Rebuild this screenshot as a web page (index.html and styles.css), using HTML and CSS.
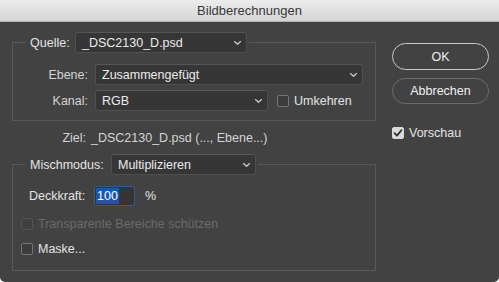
FILE: index.html
```html
<!DOCTYPE html>
<html lang="de">
<head>
<meta charset="utf-8">
<title>Bildberechnungen</title>
<link rel="stylesheet" href="styles.css">
</head>
<body>
<div class="window">
  <div class="titlebar">Bildberechnungen</div>
  <div class="content">
    <div class="main">
      <fieldset class="group group-source">
        <legend class="legend">
          <div class="legend-row">
            <span class="legend-label label-source">Quelle:</span>
            <div class="select select-source"><span>_DSC2130_D.psd</span><svg class="chev" viewBox="0 0 7 4" width="7" height="4"><polyline points="0.5,0.5 3.5,3.3 6.5,0.5"/></svg></div>
          </div>
        </legend>
        <div class="grid">
          <span class="lbl">Ebene:</span>
          <div class="select select-layer"><span>Zusammengefügt</span><svg class="chev" viewBox="0 0 7 4" width="7" height="4"><polyline points="0.5,0.5 3.5,3.3 6.5,0.5"/></svg></div>
          <span class="lbl">Kanal:</span>
          <div class="channel-row">
            <div class="select select-channel"><span>RGB</span><svg class="chev" viewBox="0 0 7 4" width="7" height="4"><polyline points="0.5,0.5 3.5,3.3 6.5,0.5"/></svg></div>
            <div class="check check-invert"><span class="box"></span><span>Umkehren</span></div>
          </div>
        </div>
      </fieldset>

      <div class="target">
        <span class="target-lbl">Ziel:</span>
        <span>_DSC2130_D.psd (..., Ebene...)</span>
      </div>

      <fieldset class="group group-blend">
        <legend class="legend">
          <div class="legend-row">
            <span class="legend-label label-blend">Mischmodus:</span>
            <div class="select select-blend"><span>Multiplizieren</span><svg class="chev" viewBox="0 0 7 4" width="7" height="4"><polyline points="0.5,0.5 3.5,3.3 6.5,0.5"/></svg></div>
          </div>
        </legend>
        <div class="blend-body">
          <div class="opacity-row">
            <span class="opacity-lbl">Deckkraft:</span>
            <div class="number-input"><span class="selected">100</span></div>
            <span class="unit">%</span>
          </div>
          <div class="check check-row disabled"><span class="box"></span><span>Transparente Bereiche schützen</span></div>
          <div class="check check-row check-mask"><span class="box"></span><span>Maske...</span></div>
        </div>
      </fieldset>
    </div>

    <div class="side">
      <div class="btn btn-ok">OK</div>
      <div class="btn btn-cancel">Abbrechen</div>
      <div class="check check-preview"><span class="box checked"><svg viewBox="0 0 12 12" width="12" height="12"><polyline points="2.6,6.2 5,8.6 9.4,3.2"/></svg></span><span>Vorschau</span></div>
    </div>
  </div>
</div>
</body>
</html>
```

FILE: styles.css
```css
* { box-sizing: border-box; }

body {
  margin: 0;
  background: #ffffff;
  font-family: "Liberation Sans", Arial, sans-serif;
  font-size: 12.5px;
}

.window {
  width: 499px;
  height: 282px;
  background: #424242;
  border-radius: 0 0 5px 5px;
  overflow: hidden;
  display: flex;
  flex-direction: column;
  color: #e4e4e4;
}

.titlebar {
  height: 22px;
  border-bottom: 1px solid #b2b2b2;
  background: linear-gradient(#ececec, #d5d5d5);
  color: #383838;
  display: flex;
  align-items: center;
  justify-content: center;
  line-height: 21px;
  font-size: 13px;
}

.content {
  flex: 1;
  display: flex;
  padding: 0 10px 0 12px;
}

.main {
  width: 364px;
  display: flex;
  flex-direction: column;
}

.side {
  margin-left: auto;
  width: 97px;
  display: flex;
  flex-direction: column;
  padding-top: 21px;
}

/* group boxes */
.group {
  margin: 0;
  padding: 0;
  border: 1px solid #585858;
  min-width: 0;
}

.group-source { margin-top: 10px; }
.group-blend { margin-top: 8px; }

.legend {
  margin-left: 13px;
  padding: 0 2px 0 4px;
}

.legend-row {
  display: flex;
  align-items: center;
  height: 21px;
}

.legend-label { line-height: 16px; }
.label-source { width: 45px; }
.label-blend { width: 81px; }

/* selects */
.select {
  height: 21px;
  display: flex;
  align-items: center;
  justify-content: space-between;
  padding: 0 5px 0 6px;
  background: #363636;
  border: 1px solid #4f4f4f;
  border-top-color: #565656;
  border-radius: 3px;
  color: #ececec;
}

.chev {
  fill: none;
  stroke: #c8c8c8;
  stroke-width: 1.3;
  stroke-linecap: round;
  stroke-linejoin: round;
}

.select-source { width: 172px; }
.select-layer { width: 268px; }
.select-channel { width: 173px; }
.select-blend { width: 145px; }

.grid {
  display: grid;
  grid-template-columns: 75px auto;
  column-gap: 7px;
  row-gap: 5px;
  align-items: center;
  padding: 11px 0 9px 0;
}

.lbl {
  text-align: right;
  color: #d4d4d4;
}

.channel-row {
  display: flex;
  align-items: center;
}

/* checkboxes */
.check {
  display: flex;
  align-items: center;
  line-height: 16px;
}

.box {
  width: 12px;
  height: 12px;
  border: 1px solid #757575;
  border-radius: 2px;
  background: #3b3b3b;
  margin-right: 5px;
  flex: none;
}

.box.checked {
  background: #d9d9d9;
  border-color: #d9d9d9;
  position: relative;
}

.box.checked svg {
  position: absolute;
  left: -1px;
  top: -1px;
  fill: none;
  stroke: #2e2e2e;
  stroke-width: 1.8;
  stroke-linecap: round;
  stroke-linejoin: round;
}

.check-invert { margin-left: 9px; }

/* target */
.target {
  display: flex;
  align-items: center;
  line-height: 16px;
  margin-top: 9px;
  color: #d4d4d4;
}

.target-lbl {
  width: 74px;
  text-align: right;
  margin-right: 5px;
}

/* blend group */
.blend-body {
  padding: 11px 0 13px 8px;
}

.opacity-row {
  display: flex;
  align-items: center;
  padding-left: 8px;
}

.opacity-lbl {
  width: 65px;
  line-height: 16px;
}

.number-input {
  width: 41px;
  height: 20px;
  background: #343434;
  border: 1px solid #2f5c96;
  border-radius: 2px;
  display: flex;
  align-items: center;
  padding-left: 1px;
}

.selected {
  background: #1d58a8;
  color: #ffffff;
  line-height: 16px;
  padding: 0 1px;
}

.unit {
  margin-left: 10px;
  line-height: 16px;
}

.check-row { margin-top: 10px; }
.check-mask { margin-top: 9px; }

.disabled { color: #6a6a6a; }
.disabled .box {
  border-color: #525252;
  background: #404040;
}

/* buttons */
.btn {
  display: flex;
  align-items: center;
  justify-content: center;
  border-radius: 14px;
  color: #f0f0f0;
}

.btn-ok {
  height: 27px;
  border: 1px solid #cacaca;
}

.btn-cancel {
  height: 26px;
  margin-top: 8px;
  border: 1px solid #6b6b6b;
}

.check-preview { margin-top: 21px; }
```
